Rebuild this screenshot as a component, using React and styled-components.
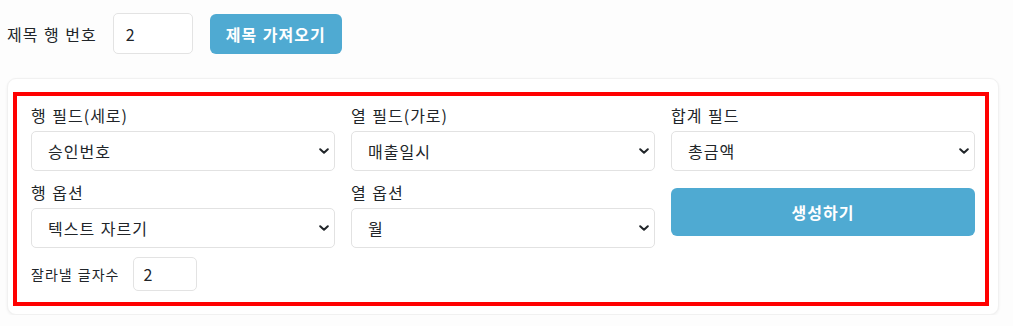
import React, { useState } from 'react';
import styled, { createGlobalStyle } from 'styled-components';

const GlobalStyle = createGlobalStyle`
    body {
        margin: 0;
        background: #fdfdfd;
        font-family: 'Noto Sans CJK KR', 'Noto Sans', sans-serif;
        color: #212529;
        letter-spacing: 1px;
        word-spacing: 1px;
    }
    * { box-sizing: border-box; }
    input, select, button { letter-spacing: 1px; word-spacing: 1px; }
`;

const Pagina = styled.div`
    padding: 13px 14px 0 7px;
`;

const BarraTitulo = styled.div`
    display: flex;
    align-items: center;
    height: 41px;
`;

const EtiquetaTitulo = styled.span`
    font-size: 16px;
    line-height: 24px;
    margin-right: 16px;
`;

const EntradaTitulo = styled.input`
    width: 80px;
    height: 41px;
    padding: 0 12px;
    border: 1px solid #e3e3e3;
    border-radius: 5px;
    font: inherit;
    font-size: 16px;
    color: #212529;
    background: #fff;
    outline: none;
    margin-right: 17px;
`;

const BotonAzul = styled.button`
    background-color: #4faad2;
    color: #fff;
    border: none;
    border-radius: 6px;
    font-family: inherit;
    font-weight: 700;
    font-size: 16px;
    cursor: pointer;
    height: ${(p) => (p.$alto ? p.$alto : 40)}px;
    padding: 0 16px;
    width: ${(p) => (p.$ancho ? '100%' : 'auto')};
    margin-top: ${(p) => p.$margenArriba || 0}px;
`;

const Tarjeta = styled.div`
    position: relative;
    margin-top: 24px;
    background: #fff;
    border-radius: 9px;
    border: 1px solid #f1f1f1;
    box-shadow: 0 1px 3px rgba(0, 0, 0, 0.06);
    padding: 24px 23px 23px 23px;
`;

const MarcoRojo = styled.div`
    position: absolute;
    left: 5px;
    top: 13px;
    right: 9px;
    bottom: 8px;
    border: 4px solid #ff0000;
    pointer-events: none;
`;

const Rejilla = styled.div`
    display: grid;
    grid-template-columns: repeat(3, 1fr);
    column-gap: 16px;
    row-gap: 9px;
`;

const Campo = styled.div`
    display: flex;
    flex-direction: column;
`;

const Etiqueta = styled.label`
    font-size: 16px;
    line-height: 24px;
    margin-bottom: 4px;
`;

const Selector = styled.select`
    appearance: none;
    height: 40px;
    width: 100%;
    padding: 0 32px 0 16px;
    border: 1px solid #e2e2e2;
    border-radius: 5px;
    background-color: #fff;
    background-image: url("data:image/svg+xml,%3csvg xmlns='http://www.w3.org/2000/svg' viewBox='0 0 10 6'%3e%3cpath fill='none' stroke='%23212529' stroke-width='2' stroke-linecap='round' stroke-linejoin='round' d='M1.2 1.2l3.8 3.6 3.8-3.6'/%3e%3c/svg%3e");
    background-repeat: no-repeat;
    background-position: right 5px center;
    background-size: 10px 6px;
    font-family: inherit;
    font-size: 16px;
    color: #212529;
    outline: none;
`;

const FilaCorte = styled.div`
    grid-column: 1 / span 3;
    display: flex;
    align-items: center;
`;

const EtiquetaChica = styled.span`
    font-size: 14px;
    line-height: 20px;
    margin-right: 14px;
`;

const EntradaChica = styled.input`
    width: 64px;
    height: 34px;
    padding: 0 9px;
    border: 1px solid #e3e3e3;
    border-radius: 5px;
    font-family: inherit;
    font-size: 16px;
    color: #212529;
    outline: none;
`;

const App = () => {
    const [filaTitulo, setFilaTitulo] = useState('2');
    const [filaCampo, setFilaCampo] = useState('승인번호');
    const [columnaCampo, setColumnaCampo] = useState('매출일시');
    const [totalCampo, setTotalCampo] = useState('총금액');
    const [filaOpcion, setFilaOpcion] = useState('텍스트 자르기');
    const [columnaOpcion, setColumnaOpcion] = useState('월');
    const [longitud, setLongitud] = useState('2');

    const campos = ['승인번호', '매출일시', '총금액'];

    return (
        <>
            <GlobalStyle />
            <Pagina>
                <BarraTitulo>
                    <EtiquetaTitulo>제목 행 번호</EtiquetaTitulo>
                    <EntradaTitulo value={filaTitulo} onChange={(e) => setFilaTitulo(e.target.value)} />
                    <BotonAzul>제목 가져오기</BotonAzul>
                </BarraTitulo>

                <Tarjeta>
                    <Rejilla>
                        <Campo>
                            <Etiqueta>행 필드(세로)</Etiqueta>
                            <Selector value={filaCampo} onChange={(e) => setFilaCampo(e.target.value)}>
                                {campos.map((c) => <option key={c}>{c}</option>)}
                            </Selector>
                        </Campo>
                        <Campo>
                            <Etiqueta>열 필드(가로)</Etiqueta>
                            <Selector value={columnaCampo} onChange={(e) => setColumnaCampo(e.target.value)}>
                                {campos.map((c) => <option key={c}>{c}</option>)}
                            </Selector>
                        </Campo>
                        <Campo>
                            <Etiqueta>합계 필드</Etiqueta>
                            <Selector value={totalCampo} onChange={(e) => setTotalCampo(e.target.value)}>
                                {campos.map((c) => <option key={c}>{c}</option>)}
                            </Selector>
                        </Campo>

                        <Campo>
                            <Etiqueta>행 옵션</Etiqueta>
                            <Selector value={filaOpcion} onChange={(e) => setFilaOpcion(e.target.value)}>
                                <option>없음</option>
                                <option>텍스트 자르기</option>
                            </Selector>
                        </Campo>
                        <Campo>
                            <Etiqueta>열 옵션</Etiqueta>
                            <Selector value={columnaOpcion} onChange={(e) => setColumnaOpcion(e.target.value)}>
                                <option>일</option>
                                <option>월</option>
                                <option>년</option>
                            </Selector>
                        </Campo>
                        <Campo>
                            <BotonAzul $ancho $alto={48} $margenArriba={8}>생성하기</BotonAzul>
                        </Campo>

                        <FilaCorte>
                            <EtiquetaChica>잘라낼 글자수</EtiquetaChica>
                            <EntradaChica value={longitud} onChange={(e) => setLongitud(e.target.value)} />
                        </FilaCorte>
                    </Rejilla>
                    <MarcoRojo />
                </Tarjeta>
            </Pagina>
        </>
    );
};

export default App;
